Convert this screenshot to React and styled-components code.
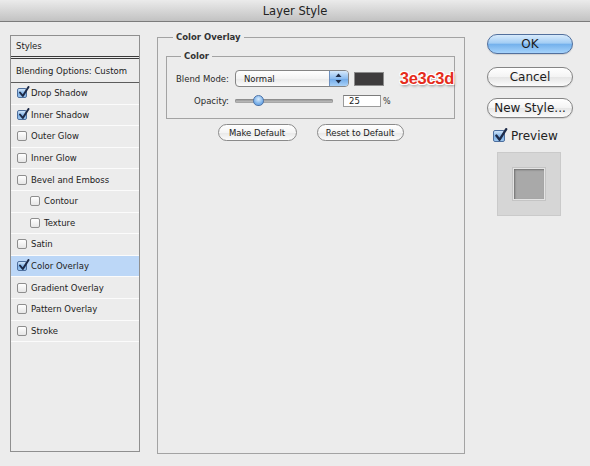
import React from 'react'
import styled, { createGlobalStyle } from 'styled-components'

const GlobalStyle = createGlobalStyle`
    html, body {
        margin: 0;
        padding: 0;
        background: #ececec;
    }
    body {
        font-family: "DejaVu Sans", "Liberation Sans", sans-serif;
        color: #222;
    }
`

const Window = styled.div`
    width: 590px;
    height: 466px;
    background: #ececec;
    overflow: hidden;
`

const TitleBar = styled.div`
    height: 21px;
    border-bottom: 1px solid #7c7c7c;
    background: linear-gradient(#ebebeb, #c2c2c2);
    display: flex;
    align-items: center;
    justify-content: center;
    font-size: 11.5px;
    color: #222;
`

const Content = styled.div`
    display: flex;
    align-items: flex-start;
    padding: 13px 0 0 10px;
`

/* ---------- left list ---------- */

const StylesList = styled.div`
    width: 130px;
    height: 417px;
    box-sizing: border-box;
    border: 1px solid #8f8f8f;
    background: #ececec;
    flex-shrink: 0;
`

const ListHeader = styled.div`
    height: ${(p) => p.$h}px;
    border-bottom: ${(p) => (p.$double ? '3px double #3a3a3a' : '1px solid #5c5c5c')};
    display: flex;
    align-items: center;
    padding-left: 5px;
    font-size: 8.5px;
`

const ListRow = styled.div`
    height: 21.6px;
    box-sizing: border-box;
    border-bottom: 1px solid #fbfbfb;
    display: flex;
    align-items: center;
    gap: 4px;
    padding-left: ${(p) => (p.$indent ? 19 : 6)}px;
    background: ${(p) => (p.$selected ? '#bcd7f7' : 'transparent')};
    font-size: 8.5px;
`

const Box = styled.span`
    position: relative;
    width: ${(p) => p.$size}px;
    height: ${(p) => p.$size}px;
    box-sizing: border-box;
    flex-shrink: 0;
    border-radius: 2px;
    border: 1px solid ${(p) => (p.$checked ? '#4d6f9e' : '#8e8e8e')};
    background: ${(p) =>
        p.$checked
            ? 'linear-gradient(#cfe4f9, #7eb1e6 55%, #9cc6ef)'
            : 'linear-gradient(#ffffff, #e6e6e6)'};

    svg {
        position: absolute;
        left: 0;
        top: -3px;
    }
`

function Check({ checked, size = 10 }) {
    return (
        <Box $checked={checked} $size={size}>
            {checked && (
                <svg width={size + 2} height={size + 2} viewBox="0 0 12 12">
                    <path d="M2 6.5 L4.8 10 L10.5 1" fill="none" stroke="#1d2a48" strokeWidth="2" strokeLinecap="round" strokeLinejoin="round" />
                </svg>
            )}
        </Box>
    )
}

/* ---------- middle panel ---------- */

const Group = styled.fieldset`
    margin: -3px 0 0 17px;
    width: 308px;
    height: 422px;
    box-sizing: border-box;
    padding: 8px 9px 0 8px;
    border: 1px solid #a3a3a3;
    min-inline-size: 0;
`

const SubGroup = styled.fieldset`
    margin: 0;
    padding: 8px 0 11px 0;
    border: 1px solid #a3a3a3;
    min-inline-size: 0;
`

const Legend = styled.legend`
    margin-left: ${(p) => p.$offset}px;
    padding: 0 3px;
    font-size: 8.5px;
    line-height: 11px;
    font-weight: bold;
    color: #333;
`

const FieldRow = styled.div`
    display: flex;
    align-items: center;
    height: ${(p) => p.$h}px;
    margin-top: ${(p) => p.$mt || 0}px;
`

const Label = styled.span`
    width: 62px;
    text-align: right;
    margin-right: 6px;
    font-size: 8.5px;
    color: #2a2a2a;
`

const Select = styled.div`
    width: 114px;
    height: 17px;
    box-sizing: border-box;
    border: 1px solid #858585;
    border-radius: 4px;
    background: linear-gradient(#ffffff, #f3f3f3 50%, #e9e9e9 51%, #fbfbfb);
    display: flex;
    align-items: center;
    overflow: hidden;
    font-size: 8.5px;
`

const SelectText = styled.span`
    flex: 1;
    padding-left: 8px;
`

const Stepper = styled.span`
    width: 18px;
    height: 100%;
    border-left: 1px solid #6c8fbf;
    background: linear-gradient(#d6e9fb, #8dbdf0 50%, #6ea8e8 51%, #a9d1f7);
    display: flex;
    align-items: center;
    justify-content: center;
`

const Swatch = styled.span`
    width: 30px;
    height: 14px;
    box-sizing: border-box;
    margin-left: 5px;
    background: #3e3c3d;
    border: 1px solid #8c8c8c;
`

const Note = styled.span`
    margin-left: 16px;
    font-family: "Liberation Sans", Arial, sans-serif;
    font-weight: bold;
    font-size: 16.5px;
    letter-spacing: -0.3px;
    color: #e52c1c;
    text-shadow:
        1px 0 0 #fff, -1px 0 0 #fff, 0 1px 0 #fff, 0 -1px 0 #fff,
        1px 1px 0 #fff, -1px -1px 0 #fff, 1px -1px 0 #fff, -1px 1px 0 #fff,
        1px 2px 3px rgba(0, 0, 0, 0.45);
`

const Track = styled.div`
    position: relative;
    width: 98px;
    height: 4px;
    border-radius: 2px;
    background: linear-gradient(#8a8a8a, #cfcfcf);
    box-shadow: inset 0 0 0 0.5px #888;
`

const Thumb = styled.span`
    position: absolute;
    left: ${(p) => p.$pos}px;
    top: -4px;
    width: 11px;
    height: 11px;
    box-sizing: border-box;
    border-radius: 50% 50% 45% 45%;
    border: 1px solid #4d73a8;
    background: radial-gradient(circle at 50% 35%, #d9ecfd, #6fa9e6 70%);
`

const NumberBox = styled.span`
    margin-left: 10px;
    width: 38px;
    height: 12px;
    box-sizing: border-box;
    border: 1px solid #9b9b9b;
    border-top-color: #7b7b7b;
    background: #fff;
    font-size: 8.5px;
    line-height: 10px;
    padding-left: 5px;
`

const Unit = styled.span`
    margin-left: 2px;
    font-size: 8px;
    color: #333;
`

const ButtonRow = styled.div`
    display: flex;
    justify-content: center;
    gap: 20px;
    margin-top: 5px;
`

const SmallButton = styled.button`
    width: ${(p) => p.$w}px;
    height: 17px;
    padding: 0;
    border: 1px solid #8a8a8a;
    border-radius: 9px;
    background: linear-gradient(#ffffff, #f4f4f4 50%, #e8e8e8 51%, #fbfbfb);
    font-family: "DejaVu Sans", sans-serif;
    font-size: 8.5px;
    color: #222;
`

/* ---------- right column ---------- */

const Side = styled.div`
    margin: -1px 0 0 22px;
    display: flex;
    flex-direction: column;
    align-items: flex-start;
`

const AquaButton = styled.button`
    width: 86px;
    height: 20px;
    margin-top: ${(p) => p.$mt || 0}px;
    padding: 0;
    border: 1px solid ${(p) => (p.$primary ? '#52709d' : '#858585')};
    border-radius: 10px;
    background: ${(p) =>
        p.$primary
            ? 'linear-gradient(#d8ebfc, #a3cdf4 45%, #74b1ec 52%, #a6d3fb)'
            : 'linear-gradient(#ffffff, #f4f4f4 48%, #e6e6e6 52%, #fbfbfb)'};
    box-shadow: 0 1px 1px rgba(0, 0, 0, 0.12);
    font-family: "DejaVu Sans", sans-serif;
    font-size: 12px;
    color: #1c1c1c;
`

const PreviewRow = styled.label`
    display: flex;
    align-items: center;
    gap: 6px;
    margin: 11px 0 0 6px;
    font-size: 12px;
    color: #222;
`

const PreviewBox = styled.div`
    width: 64px;
    height: 64px;
    box-sizing: border-box;
    margin: 9px 0 0 10px;
    background: #d6d6d6;
    border: 1px solid #cacaca;
    display: flex;
    align-items: center;
    justify-content: center;
`

const PreviewSwatch = styled.div`
    width: 32px;
    height: 32px;
    box-sizing: border-box;
    background: #a9a9a9;
    border: 1px solid #e4e4e4;
    box-shadow: inset 1px 1px 2px rgba(0, 0, 0, 0.35), 0 0 0 1px #c4c4c4;
`

const effects = [
    { name: 'Drop Shadow', checked: true },
    { name: 'Inner Shadow', checked: true },
    { name: 'Outer Glow' },
    { name: 'Inner Glow' },
    { name: 'Bevel and Emboss' },
    { name: 'Contour', indent: true },
    { name: 'Texture', indent: true },
    { name: 'Satin' },
    { name: 'Color Overlay', checked: true, selected: true },
    { name: 'Gradient Overlay' },
    { name: 'Pattern Overlay' },
    { name: 'Stroke' },
]

export default function App() {
    return (
        <Window>
            <GlobalStyle />
            <TitleBar>Layer Style</TitleBar>
            <Content>
                <StylesList>
                    <ListHeader $h={20} $double>Styles</ListHeader>
                    <ListHeader $h={23}>Blending Options: Custom</ListHeader>
                    {effects.map((e) => (
                        <ListRow key={e.name} $indent={e.indent} $selected={e.selected}>
                            <Check checked={e.checked} />
                            {e.name}
                        </ListRow>
                    ))}
                </StylesList>

                <Group>
                    <Legend $offset={7}>Color Overlay</Legend>
                    <SubGroup>
                        <Legend $offset={14}>Color</Legend>
                        <FieldRow $h={17}>
                            <Label>Blend Mode:</Label>
                            <Select>
                                <SelectText>Normal</SelectText>
                                <Stepper>
                                    <svg width="7" height="11" viewBox="0 0 7 11">
                                        <path d="M3.5 0.5 L6.5 4 L0.5 4 Z" fill="#1f2c46" />
                                        <path d="M3.5 10.5 L6.5 7 L0.5 7 Z" fill="#1f2c46" />
                                    </svg>
                                </Stepper>
                            </Select>
                            <Swatch />
                            <Note>3e3c3d</Note>
                        </FieldRow>
                        <FieldRow $h={12} $mt={8}>
                            <Label>Opacity:</Label>
                            <Track>
                                <Thumb $pos={18} />
                            </Track>
                            <NumberBox>25</NumberBox>
                            <Unit>%</Unit>
                        </FieldRow>
                    </SubGroup>
                    <ButtonRow>
                        <SmallButton $w={79}>Make Default</SmallButton>
                        <SmallButton $w={87}>Reset to Default</SmallButton>
                    </ButtonRow>
                </Group>

                <Side>
                    <AquaButton $primary>OK</AquaButton>
                    <AquaButton $mt={13}>Cancel</AquaButton>
                    <AquaButton $mt={11}>New Style...</AquaButton>
                    <PreviewRow>
                        <Check checked size={12} />
                        Preview
                    </PreviewRow>
                    <PreviewBox>
                        <PreviewSwatch />
                    </PreviewBox>
                </Side>
            </Content>
        </Window>
    )
}
